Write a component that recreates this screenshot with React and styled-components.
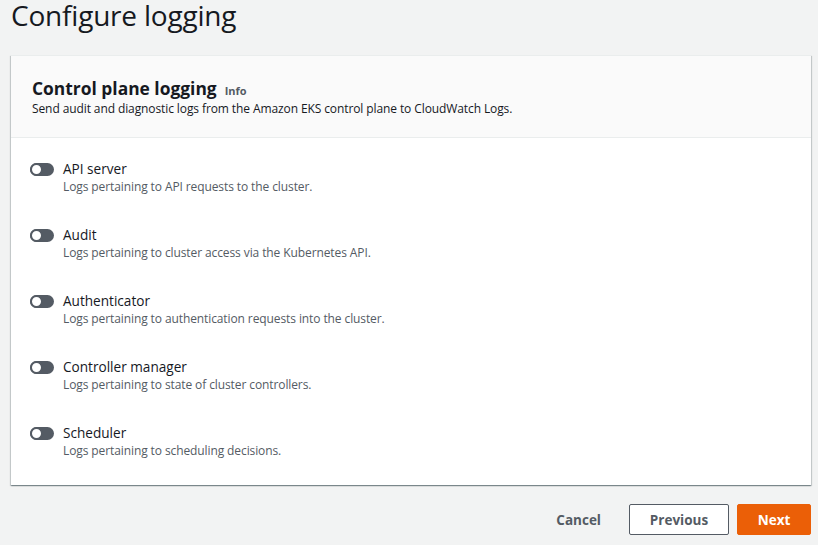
import React from "react";
import styled, { createGlobalStyle } from "styled-components";

const Global = createGlobalStyle`
  html, body { margin: 0; padding: 0; background: #f2f3f3; }
  body { font-family: "Open Sans", "Noto Sans", sans-serif; color: #16191f; }
  * { box-sizing: border-box; }
`;

const Page = styled.div`
  width: 818px;
  height: 545px;
  padding: 0 7px 0 11px;
  overflow: hidden;
`;

const Title = styled.h1`
  margin: 0;
  font-size: 28px;
  font-weight: 400;
  line-height: 30px;
  height: 55px;
  letter-spacing: -0.2px;
`;

const Card = styled.section`
  background: #ffffff;
  border-top: 1px solid #eaeded;
  box-shadow: 0 1px 1px 0 rgba(0, 28, 36, 0.3), 1px 1px 1px 0 rgba(0, 28, 36, 0.15),
    -1px 1px 1px 0 rgba(0, 28, 36, 0.15);
`;

const CardHeader = styled.header`
  background: #fafafa;
  border-bottom: 1px solid #eaeded;
  padding: 19px 20px 0 21px;
  height: 82px;
`;

const HeadingRow = styled.div`
  display: flex;
  align-items: baseline;
  gap: 8px;
`;

const Heading = styled.h2`
  margin: 0;
  font-size: 17.4px;
  font-weight: 700;
  line-height: 26px;
`;

const InfoLink = styled.span`
  font-size: 11px;
  font-weight: 700;
  color: #545b64;
`;

const Subtitle = styled.p`
  margin: 0;
  font-size: 12px;
  line-height: 16px;
  color: #16191f;
  letter-spacing: -0.1px;
`;

const CardBody = styled.div`
  padding: 21px 20px 26px 19px;
  display: flex;
  flex-direction: column;
  gap: 30px;
`;

const Row = styled.div`
  display: flex;
  align-items: flex-start;
  gap: 9px;
`;

const Toggle = styled.span`
  position: relative;
  flex: none;
  width: 24px;
  height: 13px;
  margin-top: 4px;
  border-radius: 7px;
  background: #545b64;
  &::after {
    content: "";
    position: absolute;
    left: 0;
    top: 0;
    width: 13px;
    height: 13px;
    border-radius: 50%;
    background: #fff;
    border: 2px solid #545b64;
    box-sizing: border-box;
  }
`;

const Texts = styled.div`
  display: flex;
  flex-direction: column;
`;

const Label = styled.div`
  font-size: 13.6px;
  line-height: 20px;
  color: #16191f;
`;

const Desc = styled.div`
  font-size: 12px;
  line-height: 16px;
  color: #545b64;
  letter-spacing: -0.1px;
`;

const Footer = styled.div`
  display: flex;
  justify-content: flex-end;
  align-items: center;
  gap: 8px;
  padding-top: 19px;
`;

const Button = styled.button`
  font-family: inherit;
  font-size: 13.5px;
  font-weight: 700;
  height: 31px;
  padding: 0 10px;
  border-radius: 2px;
  cursor: pointer;
  ${(p) =>
    p.$variant === "primary"
      ? `background:#eb5f07;border:1px solid #eb5f07;color:#fff;width:74px;`
      : p.$variant === "normal"
      ? `background:#fff;border:1px solid #545b64;color:#545b64;width:100px;`
      : `background:transparent;border:1px solid transparent;color:#545b64;margin-right:9px;`}
`;

const items = [
  ["API server", "Logs pertaining to API requests to the cluster."],
  ["Audit", "Logs pertaining to cluster access via the Kubernetes API."],
  ["Authenticator", "Logs pertaining to authentication requests into the cluster."],
  ["Controller manager", "Logs pertaining to state of cluster controllers."],
  ["Scheduler", "Logs pertaining to scheduling decisions."],
];

export default function App() {
  return (
    <Page>
      <Global />
      <Title>Configure logging</Title>
      <Card>
        <CardHeader>
          <HeadingRow>
            <Heading>Control plane logging</Heading>
            <InfoLink>Info</InfoLink>
          </HeadingRow>
          <Subtitle>
            Send audit and diagnostic logs from the Amazon EKS control plane to CloudWatch Logs.
          </Subtitle>
        </CardHeader>
        <CardBody>
          {items.map(([l, d]) => (
            <Row key={l}>
              <Toggle />
              <Texts>
                <Label>{l}</Label>
                <Desc>{d}</Desc>
              </Texts>
            </Row>
          ))}
        </CardBody>
      </Card>
      <Footer>
        <Button $variant="link">Cancel</Button>
        <Button $variant="normal">Previous</Button>
        <Button $variant="primary">Next</Button>
      </Footer>
    </Page>
  );
}
